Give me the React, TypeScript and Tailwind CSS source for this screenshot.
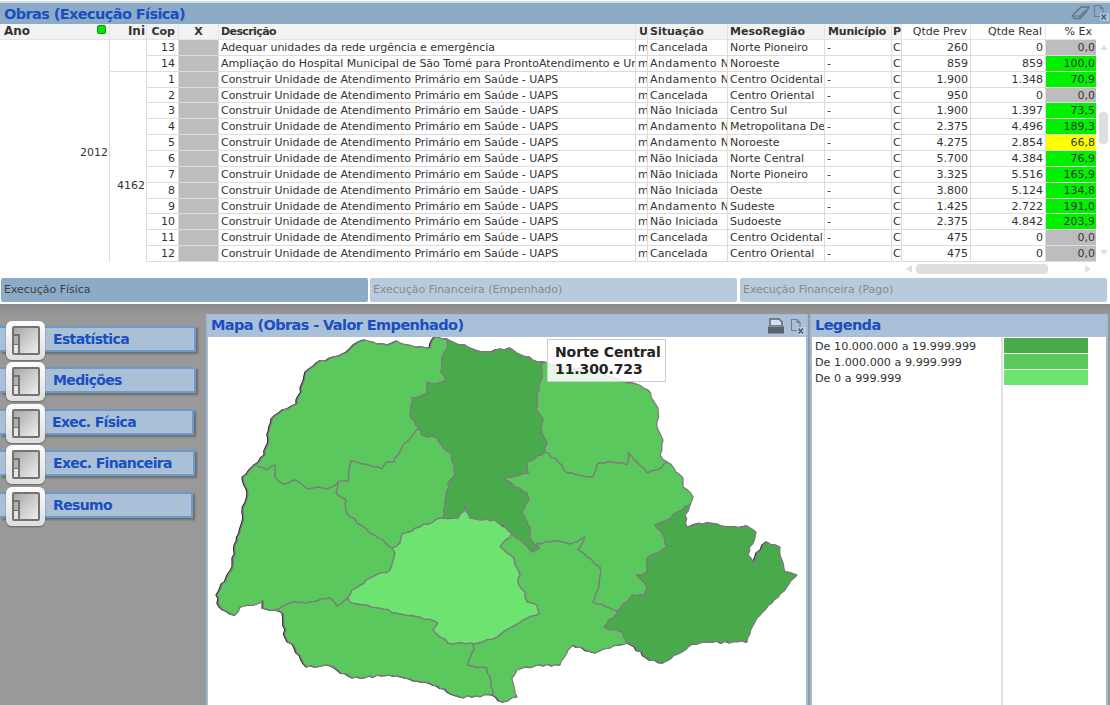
import React from "react";

const F = { fontFamily: '"DejaVu Sans", sans-serif' };

type R = [string, string, string, string, string, string, string, string];
const rows: R[] = [
  ["13", "Adequar unidades da rede urgência e emergência", "Cancelada", "Norte Pioneiro", "260", "0", "0,0", "g"],
  ["14", "Ampliação do Hospital Municipal de São Tomé para ProntoAtendimento e Urgência", "Andamento Normal", "Noroeste", "859", "859", "100,0", "l"],
  ["1", "Construir Unidade de Atendimento Primário em Saúde - UAPS", "Andamento Normal", "Centro Ocidental", "1.900", "1.348", "70,9", "l"],
  ["2", "Construir Unidade de Atendimento Primário em Saúde - UAPS", "Cancelada", "Centro Oriental", "950", "0", "0,0", "g"],
  ["3", "Construir Unidade de Atendimento Primário em Saúde - UAPS", "Não Iniciada", "Centro Sul", "1.900", "1.397", "73,5", "l"],
  ["4", "Construir Unidade de Atendimento Primário em Saúde - UAPS", "Andamento Normal", "Metropolitana De Curitiba", "2.375", "4.496", "189,3", "l"],
  ["5", "Construir Unidade de Atendimento Primário em Saúde - UAPS", "Andamento Normal", "Noroeste", "4.275", "2.854", "66,8", "y"],
  ["6", "Construir Unidade de Atendimento Primário em Saúde - UAPS", "Não Iniciada", "Norte Central", "5.700", "4.384", "76,9", "l"],
  ["7", "Construir Unidade de Atendimento Primário em Saúde - UAPS", "Não Iniciada", "Norte Pioneiro", "3.325", "5.516", "165,9", "l"],
  ["8", "Construir Unidade de Atendimento Primário em Saúde - UAPS", "Não Iniciada", "Oeste", "3.800", "5.124", "134,8", "l"],
  ["9", "Construir Unidade de Atendimento Primário em Saúde - UAPS", "Andamento Normal", "Sudeste", "1.425", "2.722", "191,0", "l"],
  ["10", "Construir Unidade de Atendimento Primário em Saúde - UAPS", "Não Iniciada", "Sudoeste", "2.375", "4.842", "203,9", "l"],
  ["11", "Construir Unidade de Atendimento Primário em Saúde - UAPS", "Cancelada", "Centro Ocidental", "475", "0", "0,0", "g"],
  ["12", "Construir Unidade de Atendimento Primário em Saúde - UAPS", "Cancelada", "Centro Oriental", "475", "0", "0,0", "g"],
];

const cell = "overflow-hidden whitespace-nowrap border-b border-r border-[#dcdcdc] px-[2px] text-[11px] leading-[15px] text-[#333]";
const head = "overflow-hidden whitespace-nowrap border-r border-b border-[#e4e4e4] bg-[#f3f3f3] px-[3px] text-[11px] font-bold leading-[15px] text-[#333]";
const title = "text-[14.5px] font-bold tracking-[-0.6px] text-[#1a4fc2]";

type P = [number, number];
const pts = (s: string): P[] => s.trim().split(/\s+/).map((p) => p.split(",").map(Number) as P);
const hash = (a: number, b: number) => {
  const v = Math.sin(a * 12.9898 + b * 78.233) * 43758.5453;
  return v - Math.floor(v) - 0.5;
};
const wob = (a: P, b: P): P[] => {
  const swap = a[0] > b[0] || (a[0] === b[0] && a[1] > b[1]);
  const [p, q] = swap ? [b, a] : [a, b];
  const dx = q[0] - p[0], dy = q[1] - p[1];
  const len = Math.hypot(dx, dy) || 1;
  const nx = -dy / len, ny = dx / len;
  const n = Math.max(1, Math.floor(len / 4));
  const out: P[] = [];
  for (let i = 1; i < n; i++) {
    const t = i / n;
    const h = hash(p[0] + p[1] * 0.37 + i, q[0] * 0.71 + q[1] + i) * 2.4;
    out.push([p[0] + dx * t + nx * h, p[1] + dy * t + ny * h]);
  }
  return swap ? out.reverse() : out;
};
const path = (s: string) => {
  const a = pts(s);
  let d = `M${a[0][0]} ${a[0][1]}`;
  a.forEach((pt, i) => {
    const nx = a[(i + 1) % a.length];
    wob(pt, nx).forEach((w) => (d += `L${w[0].toFixed(1)} ${w[1].toFixed(1)}`));
    d += `L${nx[0]} ${nx[1]}`;
  });
  return d + "Z";
};

const D = "#49aa4b", M = "#5ac85d", L = "#6ee470";
const regions: [string, string][] = [
  [M, "255,465 265,455 272,419 283,410 297,404 306,372 317,363 343,354 357,343 365,340 377,344 388,345 397,341 407,345 430,348 435,337 447,339 448,347 442,357 441,372 446,380 433,384 427,382 427,393 412,398 411,418 419,428 402,447 394,462 387,462 382,469 362,464 351,461 348,481 338,482 328,489 318,487 307,489 295,480 283,484 275,477 275,465 267,470"],
  [M, "419,428 402,447 394,462 387,462 382,469 362,464 351,461 348,481 338,482 336,493 346,500 346,512 348,515 367,530 378,538 392,548 400,543 402,534 420,527 440,518 443,518 445,502 449,487 448,483 455,475 452,455 445,450 437,438 422,435"],
  [M, "255,465 243,477 248,493 243,512 243,522 235,545 233,567 217,595 220,607 235,615 240,607 260,603 263,600 263,608 275,610 290,603 310,602 330,598 337,606 348,598 352,590 370,578 390,570 395,553 392,548 378,538 367,530 348,515 346,512 346,500 336,493 338,482 328,489 318,487 307,489 295,480 283,484 275,477 275,465 267,470"],
  [M, "275,610 283,613 286,638 295,648 307,667 327,665 353,678 390,675 433,685 460,697 493,695 487,668 468,665 474,650 472,640 475,636 470,643 448,643 433,630 438,623 420,617 400,614 380,608 350,602 348,598 337,606 330,598 310,602 290,603"],
  [M, "475,636 478,643 497,637 510,628 523,620 539,614 537,605 527,602 525,592 518,583 520,575 515,565 513,557 507,553 500,547 512,533 527,546 533,552 539,548 537,543 558,541 570,544 585,537 578,550 587,557 600,567 599,587 593,602 618,611 604,627 623,633 627,643 610,648 595,653 573,645 568,650 560,665 540,665 517,670 512,678 517,697 503,702 493,695 487,668 468,665 474,650 472,640"],
  [M, "543,362 560,366 600,373 632,383 648,390 658,408 657,427 663,440 660,455 667,462 657,470 647,473 637,462 628,453 627,465 612,462 598,463 593,477 567,473 558,462 545,452 547,443 541,427 543,419 536,410 539,390 542,372"],
  [M, "667,462 683,478 683,487 693,497 690,505 677,512 667,520 655,525 663,535 667,547 647,558 647,572 637,575 647,587 645,595 632,595 618,611 593,602 599,587 600,567 587,557 578,550 585,537 570,544 558,541 537,543 539,548 530,538 530,528 522,512 529,500 527,493 503,479 515,476 528,473 527,462 545,452 558,462 567,473 593,477 598,463 612,462 627,465 628,453 637,462 647,473 657,470"],
  [L, "465,507 458,518 443,518 440,518 420,527 402,534 400,543 392,548 395,553 390,570 370,578 352,590 348,598 350,602 380,608 400,614 420,617 438,623 433,630 448,643 470,643 478,643 497,637 510,628 523,620 539,614 537,605 527,602 525,592 518,583 520,575 515,565 513,557 507,553 500,547 512,533 522,535 513,533 495,520 470,518"],
  [D, "447,339 473,349 487,352 510,348 513,350 533,360 543,362 542,372 539,390 536,410 543,419 541,427 547,443 545,452 527,462 528,473 515,476 503,479 527,493 529,500 522,512 530,528 530,538 539,548 533,552 527,546 512,533 495,520 470,518 465,507 458,518 443,518 445,502 449,487 448,483 455,475 452,455 445,450 437,438 422,435 419,428 411,418 412,398 427,393 427,382 433,384 446,380 441,372 442,357 448,347"],
  [D, "690,505 677,512 667,520 655,525 663,535 667,547 647,558 647,572 637,575 647,587 645,595 632,595 618,611 604,627 623,633 627,643 635,647 647,658 663,663 693,644 713,642 747,642 755,622 772,603 797,575 785,572 782,560 780,547 767,542 757,553 753,563 748,555 756,532 747,526 730,527 708,523 687,527 685,515"],
];

const XlsIcon = () => (
  <svg width="17" height="17" viewBox="0 0 17 17" className="shrink-0">
    <path d="M2.5 1.5H8L11 4.5V12.5H2.5Z" fill="none" stroke="#6f7d88" strokeWidth="1.1" />
    <path d="M8 1.5V4.5H11" fill="none" stroke="#6f7d88" strokeWidth="1" />
    <rect x="8" y="9" width="9" height="8" fill="#c3d3e1" opacity="0.7" />
    <path d="M9.5 10.5L14 15.5M14 10.5L9.5 15.5" stroke="#4d5a66" strokeWidth="1.4" />
  </svg>
);
const Eraser = () => (
  <svg width="19" height="15" viewBox="0 0 19 15" className="shrink-0">
    <path d="M1 11L10 2H18L15 7L9 13.5H3.5Z" fill="none" stroke="#65737e" strokeWidth="1.4" />
    <path d="M1 11H9L15 5M9 11V13.5" fill="none" stroke="#65737e" strokeWidth="1.2" />
  </svg>
);
const Printer = () => (
  <svg width="16" height="16" viewBox="0 0 16 16" className="shrink-0">
    <path d="M2 1H11L14 4V8H2Z" fill="#d5e0ea" stroke="#59636c" strokeWidth="1.4" />
    <path d="M0 8.5H16V15.5H0Z" fill="#59636c" />
    <rect x="1.5" y="8" width="13" height="1" fill="#828d96" />
  </svg>
);
const NavIcon = () => (
  <div className="absolute -top-[7px] left-[6px] flex size-[39px] items-center justify-center rounded-[6px] bg-gradient-to-b from-[#fcfcfc] to-[#dedede] shadow-[0_1px_2px_rgba(0,0,0,0.35)]">
    <div className="flex h-[29px] w-[28px] items-end rounded-[2px] border-2 border-[#727272] bg-gradient-to-br from-[#a8a8a8] via-[#cbcbcb] to-[#eeeeee]">
      <div className="flex w-[6px] flex-col">
        <div className="h-[11px] border-r-2 border-t-2 border-b border-[#727272] bg-[#b0b0b0]" />
        <div className="h-[8px] border-r-2 border-[#727272] bg-[#e4e4e4]" />
      </div>
    </div>
  </div>
);
const NavBtn = ({ label, w, x, mt }: { label: string; w: string; x: string; mt: string }) => (
  <div className={`relative flex h-[26px] items-center border-y-2 border-r-2 border-[#6d9ac7] bg-[#a9c0d7] shadow-[2px_2px_2px_rgba(0,0,0,0.3)] ${w} ${mt}`}>
    <NavIcon />
    <span className={`text-[14px] font-bold tracking-[-0.65px] text-[#1a4fc2] ${x}`} style={F}>{label}</span>
  </div>
);

export default function App() {
  return (
    <div className="flex h-[705px] w-[1110px] flex-col overflow-hidden bg-white" style={F}>
      {/* Top panel */}
      <div className="mt-[1px] h-[2px] bg-[#cfdde9]" />
      <div className="flex h-[21px] shrink-0 items-center justify-between bg-[#8babc7] pl-[4px] pr-[1px]">
        <span className={`${title} leading-[20px]`}>Obras (Execução Física)</span>
        <div className="flex items-center gap-[2px] pb-[2px]">
          <Eraser />
          <XlsIcon />
        </div>
      </div>
      <div className="flex">
        <div className="grid w-[1096px] shrink-0 grid-cols-[110px_37px_32px_40px_417px_12px_80px_97px_67px_10px_69px_75px_50px] grid-rows-[16px_repeat(14,15.86px)]">
          <div className={`${head} relative !pl-[4px] !text-[12px]`}>
            Ano
            <span className="absolute right-[3px] top-[1px] size-[9px] rounded-[2px] border border-[#0a9a0a] bg-[#00e600]" />
          </div>
          <div className={`${head} !pr-[1px] text-right !text-[12px]`}>Ini</div>
          <div className={`${head} text-right`}>Cop</div>
          <div className={`${head} text-center`}>X</div>
          <div className={`${head} !pl-[2px] tracking-[-0.6px]`}>Descrição</div>
          <div className={head}>U</div>
          <div className={`${head} !px-[2px]`}>Situação</div>
          <div className={`${head} !px-[2px]`}>MesoRegião</div>
          <div className={`${head} !px-[3px] tracking-[-0.2px]`}>Município</div>
          <div className={`${head} !px-[1px]`}>P</div>
          <div className={`${head} bg-white text-right !font-normal`}>Qtde Prev</div>
          <div className={`${head} bg-white text-right !font-normal`}>Qtde Real</div>
          <div className={`${head} bg-white !pr-[4px] text-right !font-normal !border-r-0`}>% Ex</div>

          {rows.map((r, i) => (
            <React.Fragment key={r[0]}>
              {i === 0 && (
                <div className={`${cell} row-span-14 flex items-center justify-end !pr-[1px] !border-b-0 pt-[3px]`}>2012</div>
              )}
              {i === 0 && <div className={`${cell} row-span-2`} />}
              {i === 2 && (
                <div className={`${cell} row-span-12 flex items-center justify-end !pr-[1px] !border-b-0 pt-[37px]`}>4162</div>
              )}
              <div className={`${cell} !pr-[3px] text-right`}>{r[0]}</div>
              <div className="border-b border-r border-[#dcdcdc] bg-[#bdbdbd]" />
              <div className={`${cell} tracking-[-0.04px]`}>{r[1]}</div>
              <div className={`${cell} !pl-[2px] !pr-0`}>m</div>
              <div className={`${cell} ${r[2].startsWith("Andamento") ? "tracking-[0.35px]" : ""}`}>{r[2]}</div>
              <div className={cell}>{r[3]}</div>
              <div className={cell}>-</div>
              <div className={`${cell} !pl-[1px] !pr-0`}>C</div>
              <div className={`${cell} text-right`}>{r[4]}</div>
              <div className={`${cell} text-right`}>{r[5]}</div>
              <div
                className={`${cell} !border-r-0 !pr-[1px] text-right ${r[7] === "g" ? "bg-[#bdbdbd]" : r[7] === "y" ? "bg-[#ffff00]" : "bg-[#00f000]"}`}
              >
                {r[6]}
              </div>
            </React.Fragment>
          ))}
        </div>
        {/* vertical scrollbar */}
        <div className="ml-[3px] flex w-[9px] flex-col items-center pt-[21px]">
          <div className="h-0 w-0 border-x-[4px] border-b-[5px] border-x-transparent border-b-[#e0e0e0]" />
          <div className="mt-[62px] h-[32px] w-[9px] rounded-[4px] bg-[#dedede]" />
          <div className="mt-[106px] h-0 w-0 border-x-[4px] border-t-[5px] border-x-transparent border-t-[#e0e0e0]" />
        </div>
      </div>
      {/* horizontal scrollbar */}
      <div className="mt-[2px] flex h-[10px] items-center pl-[906px]">
        <div className="h-0 w-0 border-y-[4px] border-r-[6px] border-y-transparent border-r-[#e0e0e0]" />
        <div className="ml-[4px] h-[10px] w-[132px] rounded-[4px] bg-[#dedede]" />
        <div className="ml-[37px] h-0 w-0 border-y-[4px] border-l-[6px] border-y-transparent border-l-[#e0e0e0]" />
      </div>
      {/* Tabs */}
      <div className="mt-[4px] flex h-[24px] shrink-0 gap-[2px] pl-[1px] text-[11px] tracking-[-0.03px]">
        <div className="flex w-[367px] items-center rounded-[2px] bg-[#8babc7] pl-[3px] pt-[1px] text-[#3f3f3f]">Execução Física</div>
        <div className="flex w-[367px] items-center rounded-[2px] bg-[#b8cbdc] pl-[3px] pt-[1px] text-[#8a8a8a]">Execução Financeira (Empenhado)</div>
        <div className="ml-[1px] flex w-[367px] items-center rounded-[2px] bg-[#b8cbdc] pl-[3px] pt-[1px] text-[#8a8a8a]">Execução Financeira (Pago)</div>
      </div>
      {/* Lower area */}
      <div className="mt-[2px] flex min-h-0 flex-1 bg-[#999999] bg-gradient-to-b from-[#8b8b8b] from-0% to-[#999999] to-[3%]">
        <div className="flex w-[206px] shrink-0 flex-col pt-[22px]">
          <NavBtn label="Estatística" w="w-[196px]" x="pl-[53px]" mt="" />
          <NavBtn label="Medições" w="w-[196px]" x="pl-[53px]" mt="mt-[15px]" />
          <NavBtn label="Exec. Física" w="w-[194px]" x="pl-[52px]" mt="mt-[16px]" />
          <NavBtn label="Exec. Financeira" w="w-[195px]" x="pl-[53px]" mt="mt-[15px]" />
          <NavBtn label="Resumo" w="w-[193px]" x="pl-[53px]" mt="mt-[16px]" />
        </div>
        {/* Map panel */}
        <div className="mt-[10px] flex w-[602px] shrink-0 flex-col border-x-2 border-t border-[#9fbcd8] bg-[#a9c0d7]">
          <div className="flex h-[22px] shrink-0 items-center justify-between pl-[3px] pr-[0px]">
            <span className={title}>Mapa (Obras - Valor Empenhado)</span>
            <div className="flex items-center gap-[5px]">
              <Printer />
              <XlsIcon />
            </div>
          </div>
          <div className="relative min-h-0 flex-1 overflow-hidden bg-white">
            <svg viewBox="208 337 598 368" className="block h-[368px] w-[598px]">
              <g className="[filter:drop-shadow(-0.7px_0.8px_0_#2a2a2a)]" stroke="#7d7d7d" strokeWidth="1.3" strokeLinejoin="round">
                {regions.map(([c, p], i) => (
                  <path key={i} d={path(p)} fill={c} />
                ))}
              </g>
            </svg>
            <div className="absolute left-[339px] top-[2px] h-[43px] w-[119px] border border-[#cccccc] bg-white/85 pl-[7px] pt-[4px] text-[14px] font-bold leading-[17px] tracking-[-0.1px] text-[#222]">
              Norte Central
              <br />
              11.300.723
            </div>
          </div>
        </div>
        {/* Legend panel */}
        <div className="ml-[2px] mt-[10px] flex w-[298px] shrink-0 flex-col border-x-2 border-t border-[#9fbcd8] bg-[#a9c0d7]">
          <div className={`flex h-[22px] shrink-0 items-center pl-[3px] ${title}`}>Legenda</div>
          <div className="grid flex-1 grid-cols-[191px_1fr] bg-white">
            <div className="border-r-2 border-[#e0e0e0] pl-[3px] pt-[2px] text-[11.2px] leading-[16px] text-[#333]">
              <div>De 10.000.000 a 19.999.999</div>
              <div>De 1.000.000 a 9.999.999</div>
              <div>De 0 a 999.999</div>
            </div>
            <div className="flex flex-col gap-[1px] pl-[1px] pt-[1px]">
              <div className="h-[15px] w-[84px] bg-[#49aa4b]" />
              <div className="h-[15px] w-[84px] bg-[#5ac85d]" />
              <div className="h-[15px] w-[84px] bg-[#6ee470]" />
            </div>
          </div>
        </div>
      </div>
    </div>
  );
}
